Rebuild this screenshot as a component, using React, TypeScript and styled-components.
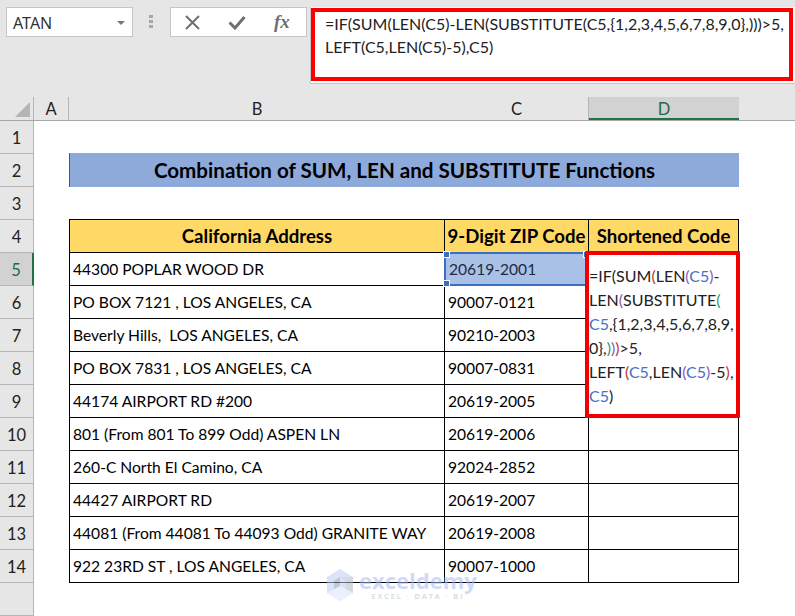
import React from "react";
import styled, { createGlobalStyle } from "styled-components";

const Global = createGlobalStyle`
  html, body { margin: 0; padding: 0; background: #fff; }
  * { box-sizing: border-box; }
`;

const COLUMNS = "34px 35px 376px 144px 150px 1fr";
const CELL_FONT = `Lato, "Liberation Sans", sans-serif`;
const UI_FONT = `"Noto Sans", "Open Sans", sans-serif`;

const Page = styled.div`
  position: relative;
  width: 795px;
  height: 616px;
  overflow: hidden;
  background: #fff;
  font-family: ${CELL_FONT};
  color: #000;
`;

const FormulaArea = styled.div`
  height: 97px;
  background: #e6e6e6;
  display: flex;
  align-items: flex-start;
  padding: 7px 0 0 6px;
`;

const NameBox = styled.div`
  width: 127px;
  height: 30px;
  background: #fff;
  border: 1px solid #c6c6c6;
  display: flex;
  align-items: center;
  justify-content: space-between;
  padding: 1px 7px 0 6px;
  font-family: ${UI_FONT};
  font-size: 16px;
  color: #333;
`;

const Caret = styled.span`
  width: 0;
  height: 0;
  border-left: 4px solid transparent;
  border-right: 4px solid transparent;
  border-top: 4px solid #777;
`;

const Grip = styled.div`
  width: 4px;
  margin: 8px 17px 0 16px;
  height: 13px;
  background: repeating-linear-gradient(to bottom, #a6a6a6 0 3px, transparent 3px 5px);
`;

const ButtonBox = styled.div`
  width: 137px;
  height: 30px;
  background: #fff;
  border: 1px solid #c6c6c6;
  display: flex;
  align-items: center;
  gap: 28px;
  padding-left: 14px;
`;

const FxLabel = styled.span`
  font-family: "Liberation Serif", serif;
  font-style: italic;
  font-weight: bold;
  font-size: 19px;
  line-height: 20px;
  color: #707070;
`;

const FormulaBar = styled.div`
  margin-left: 3px;
  flex: 1;
  height: 77px;
  background: #fff;
  border: 1px solid #c6c6c6;
  border-right: none;
  border-top: none;
`;

const FormulaHighlight = styled.div`
  width: 482px;
  height: 73px;
  margin-top: 1px;
  border: 4px solid #fe0000;
  padding-left: 10px;
  font-family: ${CELL_FONT};
  font-size: 16px;
  line-height: 23px;
  color: #222;
  white-space: nowrap;
`;

const Sheet = styled.div`
  display: grid;
  grid-template-columns: ${COLUMNS};
  grid-auto-rows: 33px;
`;

const HeaderRow = styled.div`
  display: grid;
  grid-template-columns: ${COLUMNS};
  height: 24px;
  background: #e6e6e6;
  border-bottom: 1px solid #a6a6a6;
`;

const Corner = styled.div`
  position: relative;
  border-right: 1px solid #b5b5b5;
  &::after {
    content: "";
    position: absolute;
    right: 3px;
    bottom: 3px;
    width: 0;
    height: 0;
    border-left: 15px solid transparent;
    border-bottom: 15px solid #b5b5b5;
  }
`;

const ColHead = styled.div<{ $active?: boolean; $bare?: boolean }>`
  display: flex;
  align-items: center;
  justify-content: center;
  font-size: 16.5px;
  color: ${(p) => (p.$active ? "#1f6b45" : "#222")};
  background: ${(p) => (p.$active ? "#d2d2d2" : "transparent")};
  border-right: ${(p) => (p.$bare ? "none" : "1px solid #b5b5b5")};
  box-shadow: ${(p) => (p.$active ? "inset 0 -2px 0 #217346" : "none")};
`;

const RowHead = styled.div<{ $active?: boolean }>`
  display: flex;
  align-items: center;
  justify-content: center;
  padding-top: 1px;
  font-size: 16.5px;
  color: ${(p) => (p.$active ? "#1f6b45" : "#222")};
  background: ${(p) => (p.$active ? "#d2d2d2" : "#e6e6e6")};
  border-bottom: 1px solid #b5b5b5;
  border-right: ${(p) => (p.$active ? "2px solid #217346" : "1px solid #b5b5b5")};
`;

const Blank = styled.div``;

const Title = styled.div`
  grid-column: 3 / span 3;
  margin-top: -1px;
  background: #8eaadb;
  border-left: 1px solid #555;
  display: flex;
  align-items: center;
  justify-content: center;
  font-weight: 700;
  font-size: 20.6px;
`;

const TableHead = styled.div<{ $first?: boolean }>`
  margin-top: -1px;
  background: #ffd966;
  border: 1px solid #000;
  border-left-width: ${(p) => (p.$first ? "1px" : "0")};
  display: flex;
  align-items: center;
  justify-content: center;
  font-weight: 700;
  font-size: 18.6px;
  white-space: nowrap;
`;

const Cell = styled.div<{ $first?: boolean; $raised?: boolean }>`
  position: relative;
  z-index: ${(p) => (p.$raised ? 2 : "auto")};
  background: #fff;
  border-right: 1px solid #000;
  border-bottom: 1px solid #000;
  border-left: ${(p) => (p.$first ? "1px solid #000" : "none")};
  display: flex;
  align-items: center;
  padding: 0 0 1px 3px;
  font-size: 15.6px;
  white-space: pre;
`;

const SelectedCell = styled(Cell)`
  z-index: 1;
  background: #a9c1e7;
  color: #1f2a3c;
  padding-left: 4px;
`;

const SelectFrame = styled.div`
  position: absolute;
  left: -1px;
  top: -1px;
  right: -1px;
  bottom: -1px;
  border: 2px solid #3a6fc4;
`;

const Handle = styled.span<{ $x: "left" | "right"; $y: "top" | "bottom" }>`
  position: absolute;
  ${(p) => p.$x}: -3px;
  ${(p) => p.$y}: -3px;
  width: 7px;
  height: 7px;
  background: #3a6fc4;
  border: 1px solid #fff;
`;

const EditBox = styled.div`
  position: absolute;
  left: -4px;
  top: -2px;
  width: 155px;
  height: 167px;
  background: #fff;
  border: 4px solid #f00000;
  border-radius: 1px;
  padding: 9px 0 0 0;
  font-size: 16px;
  line-height: 24px;
  color: #222;
  white-space: nowrap;
`;

const Ref = styled.span`
  color: #4472c4;
`;
const Paren = styled.span<{ $c: string }>`
  color: ${(p) => p.$c};
`;

const Watermark = styled.div`
  position: absolute;
  left: 326px;
  top: 569px;
  display: flex;
  gap: 5px;
  opacity: 0.55;
  pointer-events: none;
`;

const MarkText = styled.div`
  display: flex;
  flex-direction: column;
  align-items: center;
`;

const MarkName = styled.span`
  font-family: "Open Sans", sans-serif;
  font-weight: 700;
  font-size: 22px;
  line-height: 22px;
  color: #a9bdf5;
`;

const MarkSub = styled.span`
  margin-top: 1px;
  font-family: "Open Sans", sans-serif;
  font-weight: 600;
  font-size: 7.5px;
  line-height: 8px;
  letter-spacing: 1.9px;
  color: #b4b8c0;
`;

const data: [string, string][] = [
  ["44300 POPLAR WOOD DR", "20619-2001"],
  ["PO BOX 7121 , LOS ANGELES, CA", "90007-0121"],
  ["Beverly Hills,  LOS ANGELES, CA", "90210-2003"],
  ["PO BOX 7831 , LOS ANGELES, CA", "90007-0831"],
  ["44174 AIRPORT RD #200", "20619-2005"],
  ["801 (From 801 To 899 Odd) ASPEN LN", "20619-2006"],
  ["260-C North El Camino, CA", "92024-2852"],
  ["44427 AIRPORT RD", "20619-2007"],
  ["44081 (From 44081 To 44093 Odd) GRANITE WAY", "20619-2008"],
  ["922 23RD ST , LOS ANGELES, CA", "90007-1000"],
];

const RED = "#c0392b";
const PURPLE = "#8e5bb5";
const GREEN = "#2e9d6e";

const EditFormula = () => (
  <EditBox>
    =IF(SUM<Paren $c={RED}>(</Paren>LEN<Paren $c={PURPLE}>(</Paren><Ref>C5</Ref><Paren $c={PURPLE}>)</Paren>-
    <br />
    LEN<Paren $c={PURPLE}>(</Paren>SUBSTITUTE<Paren $c={GREEN}>(</Paren>
    <br />
    <Ref>C5</Ref>,{"{1,2,3,4,5,6,7,8,9,"}
    <br />
    {"0},"}<Paren $c={GREEN}>)</Paren><Paren $c={PURPLE}>)</Paren><Paren $c={RED}>)</Paren>{">5,"}
    <br />
    LEFT<Paren $c={RED}>(</Paren><Ref>C5</Ref>,LEN<Paren $c={PURPLE}>(</Paren><Ref>C5</Ref><Paren $c={PURPLE}>)</Paren>-5<Paren $c={RED}>)</Paren>,
    <br />
    <Ref>C5</Ref>)
  </EditBox>
);

export default function App() {
  return (
    <Page>
      <Global />
      <FormulaArea>
        <NameBox>
          ATAN
          <Caret />
        </NameBox>
        <Grip />
        <ButtonBox>
          <svg width="15" height="15" viewBox="0 0 15 15">
            <path d="M1 1 L14 14 M14 1 L1 14" stroke="#707070" strokeWidth="2" fill="none" />
          </svg>
          <svg width="18" height="15" viewBox="0 0 18 15">
            <path d="M1.5 7.5 L7 13 L16.5 2" stroke="#707070" strokeWidth="3" fill="none" />
          </svg>
          <FxLabel>fx</FxLabel>
        </ButtonBox>
        <FormulaBar>
          <FormulaHighlight>
            {"=IF(SUM(LEN(C5)-LEN(SUBSTITUTE(C5,{1,2,3,4,5,6,7,8,9,0},)))>5,"}
            <br />
            {"LEFT(C5,LEN(C5)-5),C5)"}
          </FormulaHighlight>
        </FormulaBar>
      </FormulaArea>

      <HeaderRow>
        <Corner />
        <ColHead>A</ColHead>
        <ColHead $bare>B</ColHead>
        <ColHead>C</ColHead>
        <ColHead $active $bare>D</ColHead>
        <Blank />
      </HeaderRow>

      <Sheet>
        <RowHead>1</RowHead>
        <Blank /><Blank /><Blank /><Blank /><Blank />

        <RowHead>2</RowHead>
        <Blank />
        <Title>Combination of SUM, LEN and SUBSTITUTE Functions</Title>
        <Blank />

        <RowHead>3</RowHead>
        <Blank /><Blank /><Blank /><Blank /><Blank />

        <RowHead>4</RowHead>
        <Blank />
        <TableHead $first>California Address</TableHead>
        <TableHead>9-Digit ZIP Code</TableHead>
        <TableHead>Shortened Code</TableHead>
        <Blank />

        {data.map(([address, zip], i) => (
          <React.Fragment key={i}>
            <RowHead $active={i === 0}>{i + 5}</RowHead>
            <Blank />
            <Cell $first>{address}</Cell>
            {i === 0 ? (
              <SelectedCell>
                {zip}
                <SelectFrame>
                  <Handle $x="left" $y="top" />
                  <Handle $x="left" $y="bottom" />
                  <Handle $x="right" $y="top" />
                </SelectFrame>
              </SelectedCell>
            ) : (
              <Cell>{zip}</Cell>
            )}
            <Cell $raised={i === 0}>{i === 0 && <EditFormula />}</Cell>
            <Blank />
          </React.Fragment>
        ))}

        <RowHead />
      </Sheet>

      <Watermark>
        <svg width="28" height="32" viewBox="0 0 28 32">
          <path d="M14 0 L27 8 L27 24 L14 32 L1 24 L1 8 Z" fill="#bccdf5" />
          <path d="M14 8 L27 8 L27 24 L20 20 L20 12 Z" fill="#b4bcc8" />
          <path d="M1 24 L14 32 L27 24 L14 17 Z" fill="#dbe4fa" />
          <path d="M8 12 L14 8 L14 17 L8 20 Z" fill="#8f9bb0" />
        </svg>
        <MarkText>
          <MarkName>exceldemy</MarkName>
          <MarkSub>EXCEL · DATA · BI</MarkSub>
        </MarkText>
      </Watermark>
    </Page>
  );
}
